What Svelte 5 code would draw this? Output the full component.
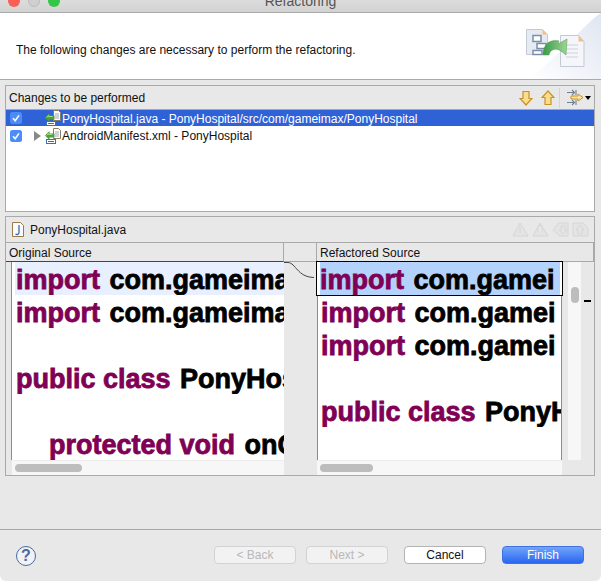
<script>
  const leftLines = [
    { kw: "import", rest: "com.gameimax.PonyHospital.R;", hl: true },
    { kw: "import", rest: "com.gameimax.PonyHospital.X;" },
    {},
    { kw: "public class", rest: "PonyHospital" },
    {},
    { kw: "protected void", rest: "onCreate()", indent: true },
  ];
  const rightLines = [
    { kw: "import", rest: "com.gamei", sel: true },
    { kw: "import", rest: "com.gamei" },
    { kw: "import", rest: "com.gamei" },
    {},
    { kw: "public class", rest: "PonyH" },
    {},
  ];
</script>

{#snippet check()}
  <svg class="check" width="12" height="12" viewBox="0 0 12 12">
    <rect width="12" height="12" rx="2.5" fill="#4c8cf6" />
    <path d="M3 6.2 5.2 8.8 9 3.4" fill="none" stroke="#fff" stroke-width="1.6" />
  </svg>
{/snippet}

{#snippet changeIcon()}
  <svg class="ficon" width="16" height="16" viewBox="0 0 16 16">
    <path d="M8.500.5h5l2 2v8h-7z" fill="#fff" stroke="#8a7a60" />
    <path d="M10 4h4M10 6h4M10 8h4" stroke="#9aa6b8" />
    <rect x="1.500" y="11.500" width="9" height="4" fill="#fff" stroke="#3d6fa8" />
    <path d="M3 13.500h6" stroke="#3d6fa8" />
    <path d="M0 7.500 4.500 3v2.500h5v4h-5V12z" fill="#4f9e3c" />
    <path d="M1.500 7.500 3.500 5.500v1h4" fill="none" stroke="#a5d88e" />
  </svg>
{/snippet}

{#snippet codeLines(lines)}
  {#each lines as l}
    <div class="line" class:hl={l.hl} class:sel={l.sel} class:indent={l.indent}>{#if l.kw}<span class="kw">{l.kw}</span> <span class="rest">{l.rest}</span>{/if}</div>
  {/each}
{/snippet}

<div class="window">
  <div class="titlebar">
    <div class="lights">
      <span class="light red"></span>
      <span class="light grey"></span>
      <span class="light green"></span>
    </div>
    <div class="title">Refactoring</div>
  </div>

  <div class="banner">
    <p>The following changes are necessary to perform the refactoring.</p>
    <svg class="wizard" width="90" height="66" viewBox="0 0 90 66">
      <defs>
        <linearGradient id="swoosh" x1="1" y1="0" x2="0" y2="1">
          <stop offset="0" stop-color="#dfe5f1" />
          <stop offset="1" stop-color="#ffffff" />
        </linearGradient>
        <linearGradient id="arrow" x1="0" y1="0" x2="1" y2="0">
          <stop offset="0" stop-color="#3a9a48" />
          <stop offset="1" stop-color="#9fd494" />
        </linearGradient>
      </defs>
      <path d="M90 0C74 10 52 40 18 66H90z" fill="url(#swoosh)" />
      <path d="M15.500 16.500h16l5 5v20h-21z" fill="#e6ebf3" stroke="#c3cad6" />
      <path d="M31.500 16.500l5 5h-5z" fill="#eec08f" />
      <path d="M22 22.500h8v6h-8zM26 30.500h9v5h-9zM22 37.500h9v4h-9z" fill="#fff" stroke="#7d8ea8" stroke-width="1.500" />
      <path d="M49.500 22.500h18l5.500 6v25h-23.500z" fill="#f4f6f9" stroke="#c3cad6" />
      <path d="M67.500 22.500l5.500 6h-5.500z" fill="#eec08f" />
      <path d="M55 32h12M55 36h12M55 40h12M55 44h12" stroke="#ccd2dc" />
      <path d="M32 42C32 31 39 26 48 28L47 31 56 26 55 42 50 38C44 34 39 37 38 42z" fill="url(#arrow)" stroke="#4a9a50" stroke-width=".5" />
    </svg>
  </div>

  <div class="content">
    <section class="panel changes">
      <header class="bar">
        <span class="bar-label">Changes to be performed</span>
        <div class="tools">
          <svg width="14" height="16" viewBox="0 0 14 16"><path d="M4 1.500h6v7h3L7 15 1 8.500h3z" fill="#fbdc8a" stroke="#c8922a" stroke-width="1.200" /></svg>
          <svg width="14" height="16" viewBox="0 0 14 16"><path d="M4 14.500h6v-7h3L7 1 1 7.500h3z" fill="#fbdc8a" stroke="#c8922a" stroke-width="1.200" /></svg>
          <i class="sep"></i>
          <svg width="18" height="17" viewBox="0 0 18 17">
            <path d="M1 3.500h7M6 1l2.500 2.500L6 6M10 1v5M1 13.500h7M6 11l2.500 2.500L6 16M10 11v5" fill="none" stroke="#6f7f92" stroke-width="1.100" />
            <path d="M5 7h7V5l5 3.500L12 12v-2H5z" fill="#fbe3a5" stroke="#c8922a" />
          </svg>
          <i class="drop"></i>
        </div>
      </header>
      <div class="tree">
        <div class="row selected">
          {@render check()}
          <i class="twist none"></i>
          {@render changeIcon()}
          <span>PonyHospital.java - PonyHospital/src/com/gameimax/PonyHospital</span>
        </div>
        <div class="row">
          {@render check()}
          <i class="twist"></i>
          {@render changeIcon()}
          <span>AndroidManifest.xml - PonyHospital</span>
        </div>
      </div>
    </section>

    <section class="panel compare">
      <header class="bar file">
        <svg width="12" height="15" viewBox="0 0 12 15">
          <path d="M.5.500h8l3 3v11H.5z" fill="#fbfbfd" stroke="#9a7a4a" />
          <path d="M7 3v7.500c0 2-2 2.500-3.500 1.500" fill="none" stroke="#3f6aa0" stroke-width="1.300" />
        </svg>
        <span class="bar-label">PonyHospital.java</span>
        <div class="tools faded">
          <svg width="17" height="15" viewBox="0 0 17 15"><path d="M8 1 1 14h15zM8 4v7" fill="#e4e4e4" stroke="#d6d6d6" /></svg>
          <svg width="17" height="15" viewBox="0 0 17 15"><path d="M8 1 1 14h15zM6 10V5l2-2 2 2v5" fill="#e4e4e4" stroke="#d6d6d6" /></svg>
          <svg width="17" height="15" viewBox="0 0 17 15"><path d="M1 8 7 1h9v13H8zM9 4h4v4h2l-4 4-4-4h2z" fill="#e4e4e4" stroke="#d6d6d6" /></svg>
          <svg width="17" height="15" viewBox="0 0 17 15"><path d="M1 1h10l5 5v8H1zM6 12V8H4l4-5 4 5h-2v4z" fill="#e4e4e4" stroke="#d6d6d6" /></svg>
        </div>
      </header>
      <div class="columns">
        <div class="col left">
          <div class="col-head">Original Source</div>
          <div class="pane">
            <div class="code">{@render codeLines(leftLines)}</div>
            <div class="hscroll"><i class="thumb"></i></div>
          </div>
        </div>
        <div class="col gutter">
          <div class="col-head"></div>
          <div class="gutter-body">
            <svg width="32" height="20" viewBox="0 0 32 20"><path d="M0 .5H4C12 1 13 15 30 15.500" fill="none" stroke="#444" /></svg>
          </div>
        </div>
        <div class="col right">
          <div class="col-head">Refactored Source</div>
          <div class="right-body">
            <div class="pane">
              <div class="code">{@render codeLines(rightLines)}</div>
              <div class="hscroll"><i class="thumb"></i></div>
            </div>
            <div class="vscroll"><i class="vthumb"></i></div>
            <div class="overview"><i class="mark"></i></div>
          </div>
        </div>
      </div>
    </section>
  </div>

  <footer class="footer">
    <svg class="help" width="20" height="20" viewBox="0 0 20 20">
      <circle cx="10" cy="10" r="9.500" fill="#f0f2f6" stroke="#4a6a9c" />
      <text x="10" y="15" text-anchor="middle">?</text>
    </svg>
    <div class="buttons">
      <button disabled>&lt; Back</button>
      <button disabled>Next &gt;</button>
      <button class="cancel">Cancel</button>
      <button class="finish">Finish</button>
    </div>
  </footer>
</div>

<style>
  :global(body) {
    background: #fff;
  }

  .window {
    width: 601px;
    height: 581px;
    display: flex;
    flex-direction: column;
    background: #e8e8e8;
    border-radius: 0 0 6px 6px;
    overflow: hidden;
    font-family: "Liberation Sans", Arial, sans-serif;
    font-size: 12px;
    color: #111;
  }

  .titlebar {
    position: relative;
    height: 12px;
    flex: none;
    background: linear-gradient(#dcdcdc, #d2d2d2);
    border-bottom: 1px solid #a9a9a9;
    overflow: hidden;
  }

  .lights {
    display: flex;
    gap: 8px;
    padding-left: 8px;
    margin-top: -5px;
  }

  .light {
    width: 12px;
    height: 12px;
    border-radius: 50%;
  }

  .red { background: #fb5e57; }
  .grey { background: #cfcfcf; border: 1px solid #bbb; box-sizing: border-box; }
  .green { background: #33c748; }

  .title {
    position: absolute;
    left: 0;
    right: 0;
    top: -7px;
    text-align: center;
    font-size: 14px;
    line-height: 16px;
    color: #555;
  }

  .banner {
    position: relative;
    height: 66px;
    flex: none;
    background: #fff;
    border-bottom: 1px solid #a9a9a9;
  }

  .banner p {
    margin: 0;
    padding: 30px 0 0 16px;
    font-size: 12px;
    line-height: 14px;
    color: #111;
  }

  .wizard {
    position: absolute;
    right: 0;
    top: 0;
  }

  .content {
    flex: 1;
    padding: 5px 6px 0 5px;
    display: flex;
    flex-direction: column;
    gap: 4px;
  }

  .panel {
    border: 1px solid #a9a9a9;
    display: flex;
    flex-direction: column;
  }

  .changes { height: 127px; box-sizing: border-box; }
  .compare { height: 260px; box-sizing: border-box; }

  .bar {
    display: flex;
    align-items: center;
    height: 24px;
    flex: none;
    box-sizing: border-box;
    padding-left: 3px;
    border-bottom: 1px solid #a9a9a9;
  }

  .tools {
    margin-left: auto;
    display: flex;
    align-items: center;
    gap: 8px;
    padding-right: 3px;
  }

  .sep {
    width: 1px;
    height: 20px;
    background: #d4d4d4;
    margin: 0 -2px 0 -4px;
  }

  .drop {
    width: 0;
    height: 0;
    margin-left: -7px;
    border-left: 3px solid transparent;
    border-right: 3px solid transparent;
    border-top: 4px solid #000;
  }

  .tree {
    flex: 1;
    background: #fff;
  }

  .row {
    display: flex;
    align-items: center;
    height: 17px;
    padding-left: 4px;
    white-space: nowrap;
  }

  .row.selected {
    height: 16px;
    margin-bottom: 1px;
    background: #2f62d6;
    color: #fff;
  }

  .row.selected span {
    padding-top: 1px;
  }

  .check { flex: none; }

  .twist {
    flex: none;
    width: 0;
    height: 0;
    margin: 0 4px 0 12px;
    border-left: 7px solid #8a8a8a;
    border-top: 5px solid transparent;
    border-bottom: 5px solid transparent;
  }

  .twist.none { border-left-color: transparent; }

  .ficon {
    flex: none;
    margin-right: 1px;
  }

  .file {
    gap: 6px;
    padding-left: 6px;
    height: 26px;
  }

  .faded {
    gap: 3px;
    padding-right: 5px;
  }

  .columns {
    flex: 1;
    display: flex;
    min-height: 0;
  }

  .col {
    display: flex;
    flex-direction: column;
    min-width: 0;
  }

  .col-head {
    height: 19px;
    flex: none;
    box-sizing: border-box;
    padding: 3px 0 0 3px;
    line-height: 14px;
    border-right: 1px solid #a9a9a9;
    border-bottom: 1px solid #444;
  }

  .left { width: 278px; }
  .gutter { width: 33px; }
  .right { flex: 1; }

  .gutter .col-head { border-bottom-color: #a9a9a9; }
  .right .col-head { border-bottom-color: #a9a9a9; }

  .left .pane { margin-left: 5px; }

  .gutter-body {
    flex: 1;
    overflow: visible;
  }

  .gutter-body svg {
    display: block;
  }

  .pane {
    flex: 1;
    min-width: 0;
    display: flex;
    flex-direction: column;
  }

  .code {
    flex: 1;
    min-height: 0;
    background: #fff;
    border-left: 1px solid #8c8c8c;
    overflow: hidden;
  }

  .right .code {
    border-right: 1px solid #8c8c8c;
    overflow: visible;
    position: relative;
  }

  .line {
    height: 33px;
    width: 100%;
    box-sizing: border-box;
    padding-left: 4px;
    overflow: hidden;
    white-space: pre;
    font-family: "Liberation Sans", Arial, sans-serif;
    font-weight: 700;
    font-size: 27px;
    line-height: 37px;
    color: #000;
    -webkit-text-stroke: 0.8px currentColor;
  }

  .kw { color: #7f0055; }

  .rest { margin-left: 2px; }

  .hl {
    background: linear-gradient(90deg, #fff 3px, #e8f0ff 3px);
  }

  .line.indent {
    padding-left: 37px;
  }

  .right .line {
    padding-left: 3px;
  }

  .sel {
    position: relative;
    background: linear-gradient(90deg, #fff 3px, #b4d3fc 3px, #b4d3fc calc(100% - 2px), #fff calc(100% - 2px));
    outline: 1px solid #000;
    width: calc(100% + 2px);
    margin-left: -1px;
  }

  .hscroll {
    height: 15px;
    flex: none;
    background: #f7f7f7;
    border-top: 1px solid #ececec;
    box-sizing: border-box;
    padding: 3px 0 0 3px;
  }

  .left .hscroll { margin-left: 1px; }

  .thumb {
    display: block;
    height: 8px;
    border-radius: 4px;
    background: #bdbdbd;
  }

  .left .thumb { width: 67px; }
  .right .thumb { width: 53px; }

  .right-body {
    flex: 1;
    display: flex;
    min-height: 0;
  }

  .right .pane { flex: none; width: 245px; }

  .vscroll {
    width: 13px;
    margin: 0 0 15px 6px;
    background: #f7f7f7;
    flex: none;
  }

  .vthumb {
    display: block;
    width: 8px;
    height: 16px;
    margin: 25px 0 0 3px;
    border-radius: 4px;
    background: #bdbdbd;
  }

  .overview {
    flex: 1;
    position: relative;
  }

  .mark {
    position: absolute;
    left: 3px;
    top: 38px;
    width: 7px;
    height: 2px;
    background: #000;
  }

  .footer {
    flex: none;
    height: 52px;
    box-sizing: border-box;
    border-top: 1px solid #a9a9a9;
    display: flex;
    align-items: flex-start;
    padding: 16px 17px 0 16px;
  }

  .help text {
    font-size: 16px;
    font-weight: 700;
    fill: #4a6a9c;
    font-family: "Liberation Sans", Arial, sans-serif;
  }

  .buttons {
    margin-left: auto;
    display: flex;
    gap: 10px;
  }

  button {
    width: 82px;
    height: 18px;
    padding: 0;
    border: 1px solid #d2d2d2;
    border-radius: 4px;
    background: #f2f2f2;
    color: #b8b8b8;
    font: 12px/16px "Liberation Sans", Arial, sans-serif;
  }

  .cancel {
    margin-left: 6px;
    background: #fff;
    border-color: #b4b4b4;
    color: #111;
  }

  .finish {
    margin-left: 6px;
    background: linear-gradient(#6fa5fb, #2a66f0);
    border-color: #3f72e0;
    color: #fff;
  }
</style>
